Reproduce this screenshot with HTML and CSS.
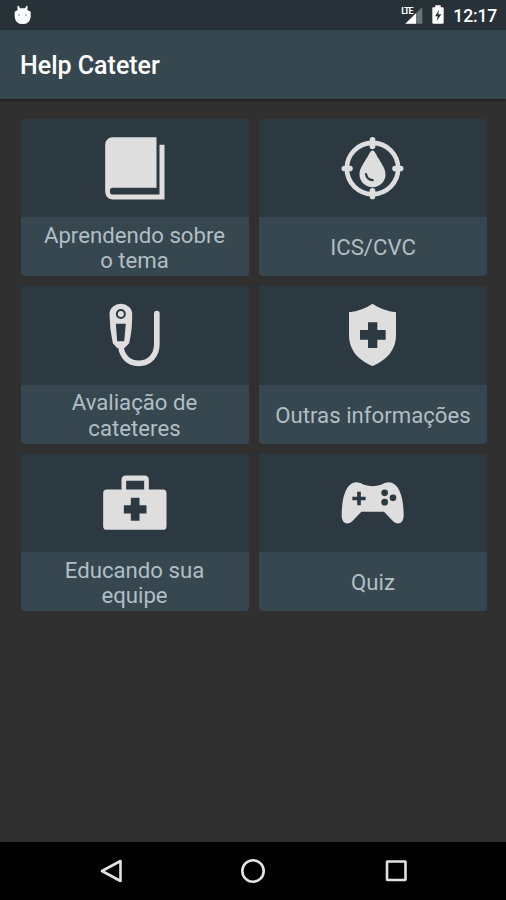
FILE: index.html
```html
<!DOCTYPE html>
<html lang="pt-BR">
<head>
<meta charset="utf-8">
<title>Help Cateter</title>
<link rel="stylesheet" href="styles.css">
</head>
<body>
<div class="status">
  <svg class="robot" viewBox="0 0 54 60"><path d="M10 4l4-2 4 8h15l4-8 4 2-1 11 10 5v15q-2 22-24 22T2 35V20l9-5z" fill="#fff"/><circle cx="15" cy="30" r="2.5" fill="#667178"/><circle cx="36" cy="30" r="2.5" fill="#667178"/></svg>
  <div class="status-right">
    <div class="signal"><svg viewBox="0 0 66 60"><path d="M64 6v50H13z" fill="#69767c"/><path d="M45 25v31H13z" fill="#fff"/></svg><span>LTE</span></div>
    <svg class="battery" viewBox="0 0 36 60"><path d="M10 1h16v6h6q3 0 3 3v43q0 3-3 3H4q-3 0-3-3V10q0-3 3-3h6z" fill="#fff"/><path d="M21 15L9 34h8l-3 14 14-20h-9z" fill="#26323a"/></svg>
    <time>12:17</time>
  </div>
</div>
<header class="appbar"><h1>Help Cateter</h1></header>
<main class="grid">
  <section class="card">
    <div class="picture"><svg viewBox="28.5 22.5 210 210" fill="#dedede"><path d="M64 35H198V187H67a9 10 0 0 0 0 20H207V58h15v164H66q-21-3-22-24V57q2-20 20-22z"/></svg></div>
    <div class="label">Aprendendo sobre<br>o tema</div>
  </section>
  <section class="card">
    <div class="picture"><svg viewBox="24 22.5 210 210"><circle cx="127.500" cy="129" r="77" fill="none" stroke="#dedede" stroke-width="14"/><path d="M127.500 43v19M127.500 196v17M43 129h17M195 129h17" stroke="#dedede" stroke-width="17" stroke-linecap="round"/><path d="M127.500 74q5 0 10 11c12 24 29 41 29 62a39 38 0 0 1-78 0c0-21 17-38 29-62q5-11 10-11z" fill="#dedede"/><path d="M108 146q3 17 20 18" fill="none" stroke="#2d3941" stroke-width="7" stroke-linecap="round"/></svg></div>
    <div class="label">ICS/CVC</div>
  </section>
  <section class="card">
    <div class="picture"><svg viewBox="28.500 15 210 210"><path d="M91 154c3 29 22 51 53 51 34 0 55-25 55-58V56" fill="none" stroke="#dedede" stroke-width="17" stroke-linecap="round"/><path fill-rule="evenodd" d="M57 57a34 31 0 0 1 68 0q1 45-9 88l-14 14H80l-13-14Q57 101 57 57zM76 86l4 53h21l5-53z" fill="#dedede"/><path d="M85 91h13v36H85z" fill="#2d3941"/><circle cx="91" cy="57" r="12" fill="none" stroke="#2d3941" stroke-width="6"/></svg></div>
    <div class="label">Avaliação de<br>cateteres</div>
  </section>
  <section class="card">
    <div class="picture"><svg viewBox="24 15 210 210"><path d="M127.500 26Q158 47 198 52v67c0 49-31 77-70.500 94C88 196 57 168 57 119V52q40-5 70.500-26z" fill="#dedede"/><path d="M114 82h28v23h25v29h-25v25h-28v-25H90v-29h24z" fill="#2d3941"/></svg></div>
    <div class="label">Outras informações</div>
  </section>
  <section class="card">
    <div class="picture"><svg viewBox="28.500 7.500 210 210"><path fill-rule="evenodd" d="M49 72h44V44q0-14 13-14h56q13 0 13 14v28h42q11 0 11 11v99q0 11-11 11H49q-11 0-11-11V83q0-11 11-11zM107 46v26h54V46zM121 97v22h-21v25h21v22h26v-22h21v-25h-21V97z" fill="#dedede"/></svg></div>
    <div class="label">Educando sua<br>equipe</div>
  </section>
  <section class="card">
    <div class="picture"><svg viewBox="24 7.500 210 210"><path d="M65 54q19-9 37 4 26 8 51 0 18-13 37-4c22 12 31 52 31 96 0 24-17 30-31 18l-28-29H94l-28 29c-14 12-31 6-31-18 0-44 9-84 30-96z" fill="#dedede"/><path d="M87 79v40M67 99h40" stroke="#2d3941" stroke-width="11"/><g fill="#2d3941"><circle cx="164" cy="82" r="10"/><circle cx="189" cy="97" r="10"/><circle cx="164" cy="110" r="10"/></g></svg></div>
    <div class="label">Quiz</div>
  </section>
</main>
<nav class="navbar">
  <svg viewBox="0 0 30 30"><path d="M25.500 5v20L7 15z"/></svg>
  <svg viewBox="0 0 30 30"><circle cx="15" cy="15" r="10.700"/></svg>
  <svg viewBox="0 0 30 30"><rect x="6" y="5.500" width="18.500" height="18.500" rx=".5"/></svg>
</nav>
</body>
</html>
```
FILE: styles.css
```css
* { box-sizing: border-box; }
body {
  margin: 0;
  width: 506px;
  height: 900px;
  display: flex;
  flex-direction: column;
  overflow: hidden;
  background: #303030;
  font-family: Roboto, sans-serif;
}
.status {
  height: 30px;
  flex: none;
  display: flex;
  justify-content: space-between;
  align-items: center;
  padding: 0 9px 0 14px;
  background: #263238;
}
.robot { width: 18px; height: 20px; }
.status-right { display: flex; align-items: center; }
.signal { position: relative; width: 22px; height: 20px; }
.signal svg { display: block; width: 22px; height: 20px; }
.signal span {
  position: absolute;
  left: 0;
  top: 1px;
  font-size: 9px;
  line-height: 10px;
  font-weight: 700;
  letter-spacing: -1.2px;
  color: #fff;
}
.battery { width: 12px; height: 20px; margin: 0 9px; }
time { font-size: 17.5px; line-height: 30px; font-weight: 500; letter-spacing: -.15px; color: #fff; padding-top: 2px; }
.appbar {
  height: 68.5px;
  flex: none;
  display: flex;
  align-items: center;
  padding-left: 20px;
  background: #37474f;
  box-shadow: 0 1px 2px #181818;
}
h1 { margin: 4px 0 0; font-size: 25px; line-height: 30px; font-weight: 500; color: #fff; }
.grid {
  flex: 1;
  display: grid;
  grid-template-columns: 228px 228px;
  grid-auto-rows: 157.5px;
  align-content: start;
  gap: 10px 10.5px;
  padding: 20px 0 0 20.5px;
}
.card {
  display: flex;
  flex-direction: column;
  overflow: hidden;
  border-radius: 4px;
  background: #37474f;
}
.picture {
  height: 98.5px;
  flex: none;
  display: flex;
  align-items: center;
  justify-content: center;
  background: #2d3941;
}
.picture svg { width: 70px; height: 70px; }
.label {
  flex: 1;
  display: flex;
  align-items: center;
  justify-content: center;
  padding-top: 3px;
  text-align: center;
  font-size: 22.2px;
  line-height: 25.5px;
  color: #b0bec5;
}
.navbar {
  height: 58px;
  flex: none;
  display: flex;
  align-items: center;
  justify-content: space-between;
  padding: 0 95px;
  background: #000;
}
.navbar svg { width: 30px; height: 30px; fill: none; stroke: #e2e2e2; stroke-width: 2.6; stroke-linejoin: round; }
```
